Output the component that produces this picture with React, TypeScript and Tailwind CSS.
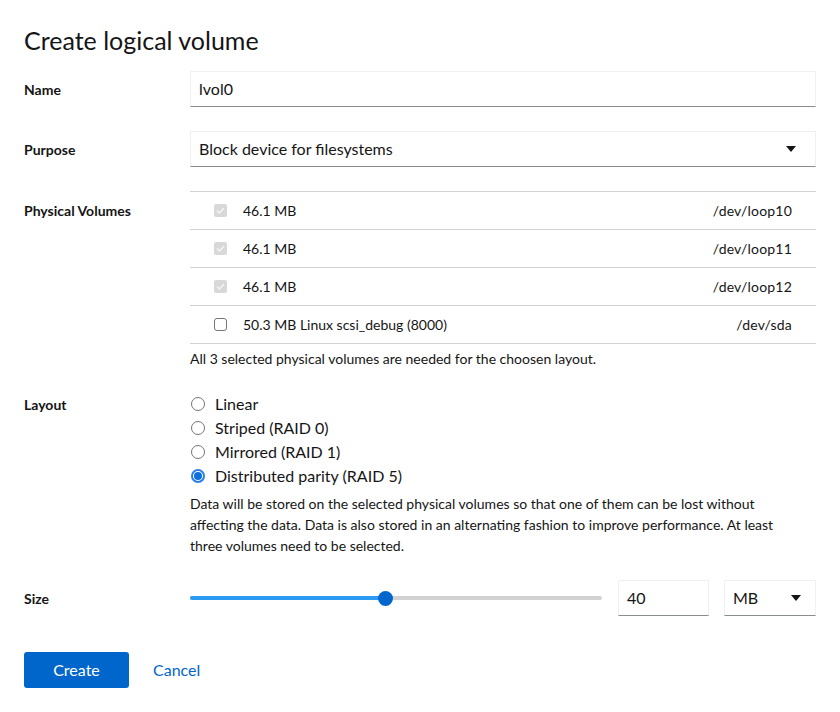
import React, { useState } from 'react';

const FONT = "font-['Lato',sans-serif]";

const Caret: React.FC = () => (
    <svg width="10" height="6" viewBox="0 0 10 6" className="shrink-0">
        <path d="M0 0 L10 0 L5 6 Z" fill="#151515" />
    </svg>
);

const Check: React.FC<{ checked: boolean; disabled?: boolean }> = ({ checked, disabled }) => {
    if (checked && disabled) {
        return (
            <span className="w-[13px] h-[13px] rounded-[2px] bg-[#d8d8d8] flex items-center justify-center shrink-0">
                <svg width="9" height="7" viewBox="0 0 9 7">
                    <path d="M1 3.5 L3.5 6 L8 1" stroke="#f4f4f4" strokeWidth="1.5" fill="none" />
                </svg>
            </span>
        );
    }
    return <span className="w-[13px] h-[13px] rounded-[3px] border border-[#767676] bg-white shrink-0" />;
};

const Radio: React.FC<{ checked: boolean }> = ({ checked }) =>
    checked ? (
        <span className="w-[14px] h-[14px] rounded-full border-2 border-[#2b7de9] bg-white flex items-center justify-center shrink-0">
            <span className="w-[8px] h-[8px] rounded-full bg-[#0b6fde]" />
        </span>
    ) : (
        <span className="w-[14px] h-[14px] rounded-full border border-[#767676] bg-white shrink-0" />
    );

const volumes = [
    { size: '46.1 MB', dev: '/dev/loop10', checked: true },
    { size: '46.1 MB', dev: '/dev/loop11', checked: true },
    { size: '46.1 MB', dev: '/dev/loop12', checked: true },
    { size: '50.3 MB Linux scsi_debug (8000)', dev: '/dev/sda', checked: false },
];

const layouts = ['Linear', 'Striped (RAID 0)', 'Mirrored (RAID 1)', 'Distributed parity (RAID 5)'];

const App: React.FC = () => {
    const [layout] = useState(3);
    const pct = 47.5;

    return (
        <div className={`${FONT} w-[840px] h-[712px] bg-white text-[#151515] px-6 pt-[24px]`}>
            <h1 className="text-[25px] leading-[32px] font-normal">Create logical volume</h1>

            <div className="mt-[15px] grid grid-cols-[166px_1fr] gap-y-6 items-start">
                <div className="text-[14px] font-bold h-[36px] flex items-center">Name</div>
                <div className="h-[36px] border border-[#f0f0f0] border-b-[#8a8d90] flex items-center px-2 text-[16px]">lvol0</div>

                <div className="text-[14px] font-bold h-[36px] flex items-center">Purpose</div>
                <div className="h-[36px] border border-[#f0f0f0] border-b-[#8a8d90] flex items-center justify-between pl-2 pr-[19px] text-[16px]">
                    <span>Block device for filesystems</span>
                    <Caret />
                </div>

                <div className="text-[14px] font-bold h-[38px] flex items-center">Physical Volumes</div>
                <div>
                    <div className="border-t border-[#d2d2d2]">
                        {volumes.map((v, i) => (
                            <div key={i} className="h-[38px] border-b border-[#d2d2d2] flex items-center pl-6 pr-6 text-[14px]">
                                <Check checked={v.checked} disabled={v.checked} />
                                <span className="ml-4">{v.size}</span>
                                <span className="ml-auto tracking-[0.2px]">{v.dev}</span>
                            </div>
                        ))}
                    </div>
                    <p className="mt-[6px] text-[14px] leading-[18px]">All 3 selected physical volumes are needed for the choosen layout.</p>
                </div>

                <div className="text-[14px] font-bold h-[24px] flex items-center">Layout</div>
                <div>
                    {layouts.map((l, i) => (
                        <div key={l} className="h-[24px] flex items-center gap-[10px] pl-[1px] text-[16px]">
                            <Radio checked={layout === i} />
                            <span>{l}</span>
                        </div>
                    ))}
                    <p className="mt-[5px] text-[14px] leading-[21px] pr-10">
                        Data will be stored on the selected physical volumes so that one of them can be lost without affecting the data. Data is also stored in an alternating fashion to improve performance. At least three volumes need to be selected.
                    </p>
                </div>

                <div className="text-[14px] font-bold h-[36px] flex items-center">Size</div>
                <div className="h-[36px] flex items-center">
                    <div className="relative w-[412px] h-[4px] rounded-full bg-[#d2d2d2]">
                        <div className="absolute left-0 top-0 h-[4px] rounded-full bg-[#2b9af3]" style={{ width: `${pct}%` }} />
                        <div
                            className="absolute top-1/2 w-[15px] h-[15px] -mt-[7.5px] -ml-[7.5px] rounded-full bg-[#0066cc]"
                            style={{ left: `${pct}%` }}
                        />
                    </div>
                    <div className="ml-4 w-[91px] h-[36px] border border-[#f0f0f0] border-b-[#8a8d90] flex items-center px-2 text-[16px]">40</div>
                    <div className="ml-[15px] flex-1 h-[36px] border border-[#f0f0f0] border-b-[#8a8d90] flex items-center justify-between pl-2 pr-[14px] text-[16px]">
                        <span>MB</span>
                        <Caret />
                    </div>
                </div>
            </div>

            <div className="mt-9 flex items-center gap-6">
                <button className="w-[105px] h-[36px] rounded-[3px] bg-[#0066cc] text-white text-[16px]">Create</button>
                <button className="text-[#0066cc] text-[16px]">Cancel</button>
            </div>
        </div>
    );
};

export default App;
